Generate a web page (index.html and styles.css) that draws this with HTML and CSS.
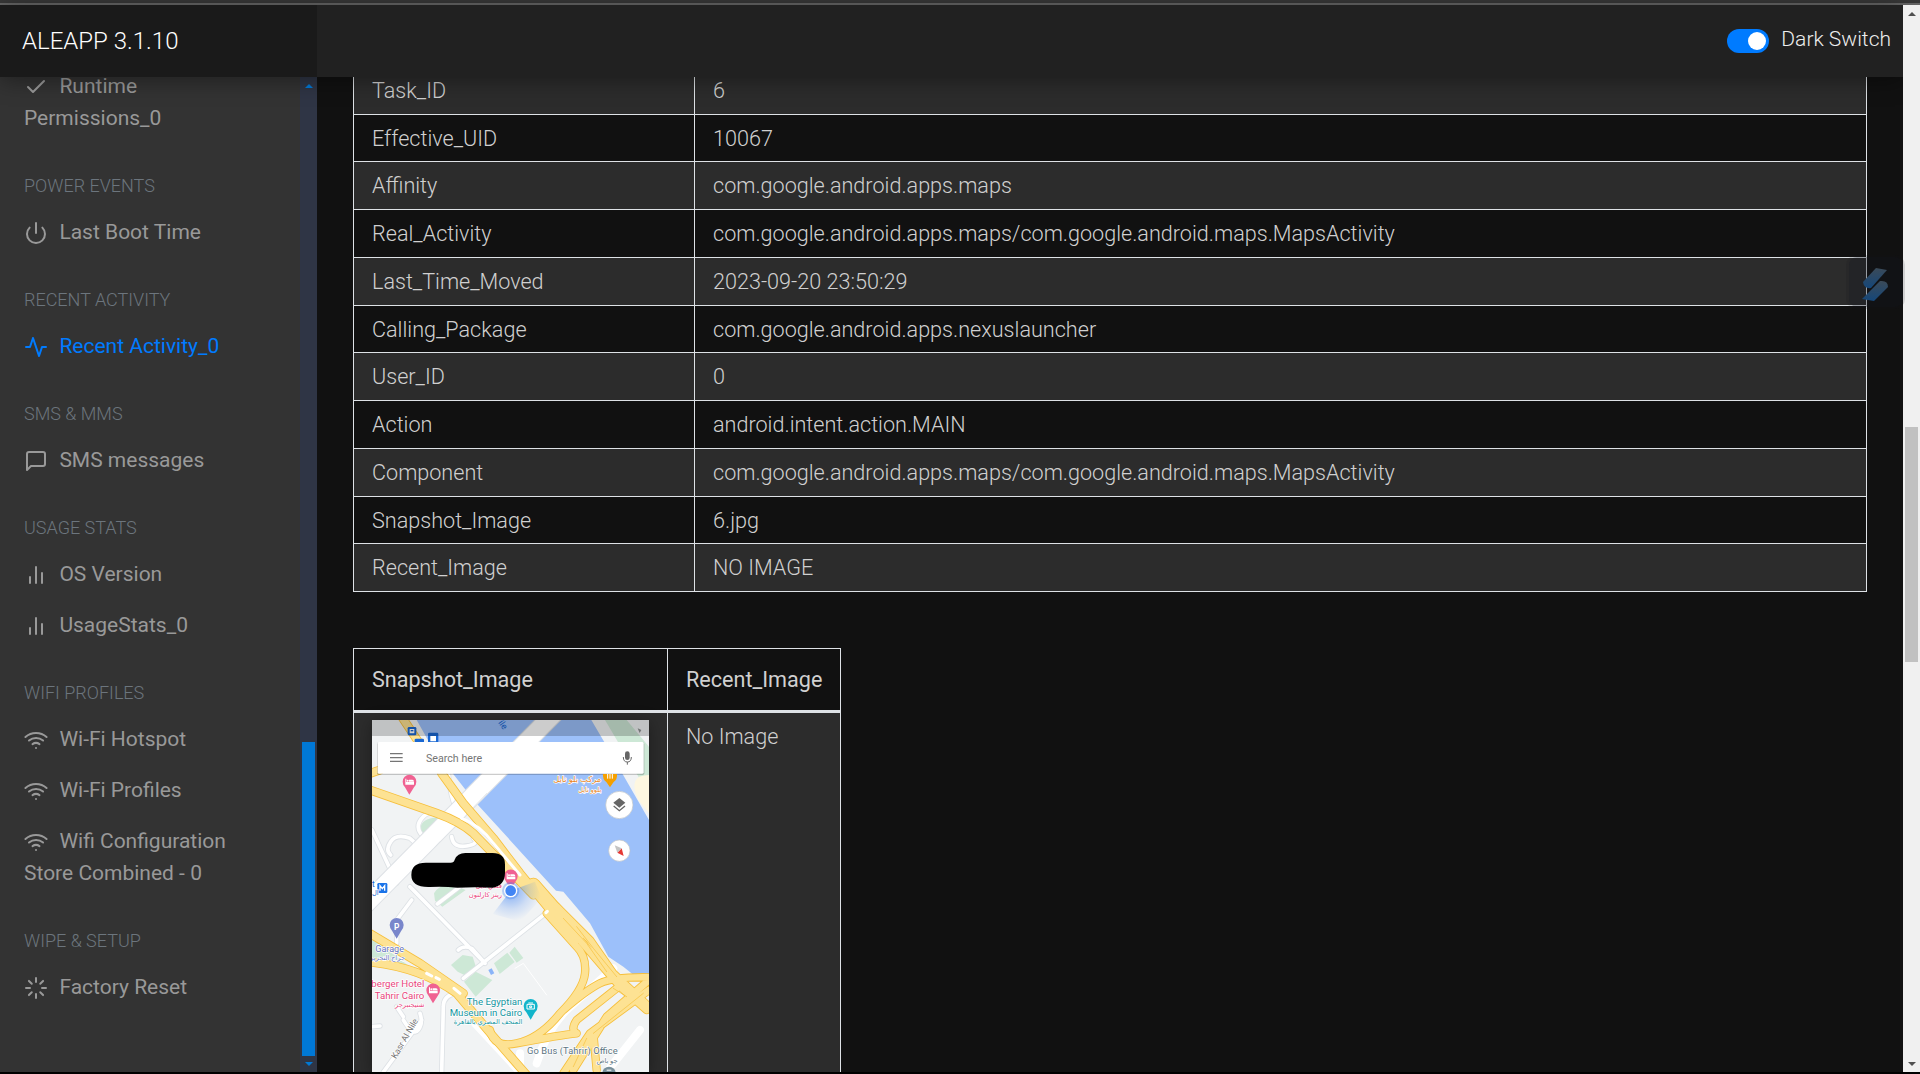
FILE: index.html
```html
<!DOCTYPE html>
<html lang="en">
<head>
<meta charset="utf-8">
<title>ALEAPP 3.1.10</title>
<link rel="stylesheet" href="styles.css">
</head>
<body>
<div class="window-edge"></div>
<div class="viewport">
  <div class="app">
    <header class="topbar">
      <div class="brand">ALEAPP 3.1.10</div>
      <div class="switch-area"><span class="toggle"><span class="knob"></span></span><span class="switch-label">Dark Switch</span></div>
    </header>
    <div class="body">
      <nav class="sidebar">
        <div class="nav-scroll">
          <a class="item"><svg class="icon" viewBox="0 0 24 24"><path d="M20 6 9 17l-5-5"/></svg>Runtime Permissions_0</a>
          <h6>Power Events</h6>
          <a class="item"><svg class="icon" viewBox="0 0 24 24"><path d="M18.36 6.64a9 9 0 1 1-12.73 0M12 2v10"/></svg>Last Boot Time</a>
          <h6>Recent Activity</h6>
          <a class="item active"><svg class="icon" viewBox="0 0 24 24"><path d="M22 12h-4l-3 9L9 3l-3 9H2"/></svg>Recent Activity_0</a>
          <h6>SMS &amp; MMS</h6>
          <a class="item"><svg class="icon" viewBox="0 0 24 24"><path d="M21 15a2 2 0 0 1-2 2H7l-4 4V5a2 2 0 0 1 2-2h14a2 2 0 0 1 2 2z"/></svg>SMS messages</a>
          <h6>Usage Stats</h6>
          <a class="item"><svg class="icon" viewBox="0 0 24 24"><path d="M18 20V10M12 20V4M6 20v-6"/></svg>OS Version</a>
          <a class="item"><svg class="icon" viewBox="0 0 24 24"><path d="M18 20V10M12 20V4M6 20v-6"/></svg>UsageStats_0</a>
          <h6>Wifi Profiles</h6>
          <a class="item"><svg class="icon" viewBox="0 0 24 24"><path d="M5 12.55a11 11 0 0 1 14.08 0M1.42 9a16 16 0 0 1 21.16 0M8.53 16.11a6 6 0 0 1 6.95 0M12 20h.01"/></svg>Wi-Fi Hotspot</a>
          <a class="item"><svg class="icon" viewBox="0 0 24 24"><path d="M5 12.55a11 11 0 0 1 14.08 0M1.42 9a16 16 0 0 1 21.16 0M8.53 16.11a6 6 0 0 1 6.95 0M12 20h.01"/></svg>Wi-Fi Profiles</a>
          <a class="item"><svg class="icon" viewBox="0 0 24 24"><path d="M5 12.55a11 11 0 0 1 14.08 0M1.42 9a16 16 0 0 1 21.16 0M8.53 16.11a6 6 0 0 1 6.95 0M12 20h.01"/></svg>Wifi Configuration Store Combined - 0</a>
          <h6>Wipe &amp; Setup</h6>
          <a class="item"><svg class="icon" viewBox="0 0 24 24"><path d="M12 2v4M12 18v4M4.93 4.93l2.83 2.83M16.24 16.24l2.83 2.83M2 12h4M18 12h4M4.93 19.07l2.83-2.83M16.24 7.76l2.83-2.83"/></svg>Factory Reset</a>
        </div>
        <div class="bar nav-bar"><i class="up"></i><b></b><i class="down"></i></div>
      </nav>
      <main class="content">
        <table class="grid details">
          <tr><td>Task_ID</td><td>6</td></tr>
          <tr><td>Effective_UID</td><td>10067</td></tr>
          <tr><td>Affinity</td><td>com.google.android.apps.maps</td></tr>
          <tr><td>Real_Activity</td><td>com.google.android.apps.maps/com.google.android.maps.MapsActivity</td></tr>
          <tr><td>Last_Time_Moved</td><td>2023-09-20 23:50:29</td></tr>
          <tr><td>Calling_Package</td><td>com.google.android.apps.nexuslauncher</td></tr>
          <tr><td>User_ID</td><td>0</td></tr>
          <tr><td>Action</td><td>android.intent.action.MAIN</td></tr>
          <tr><td>Component</td><td>com.google.android.apps.maps/com.google.android.maps.MapsActivity</td></tr>
          <tr><td>Snapshot_Image</td><td>6.jpg</td></tr>
          <tr><td>Recent_Image</td><td>NO IMAGE</td></tr>
        </table>
        <table class="grid images">
          <thead><tr><th>Snapshot_Image</th><th>Recent_Image</th></tr></thead>
          <tbody><tr><td>
            <svg class="map" viewBox="36 30 831 1056">
              <defs>
                <radialGradient id="beam" gradientUnits="userSpaceOnUse" cx="452" cy="542" r="92"><stop offset="0" stop-color="#4285f4" stop-opacity=".65"/><stop offset=".6" stop-color="#4285f4" stop-opacity=".2"/><stop offset="1" stop-color="#4285f4" stop-opacity="0"/></radialGradient>
              </defs>
              <path fill="#f1f3f4" d="M36 30h831v1056H36z"/>
              <!-- river -->
              <path fill="#9cc0fa" d="M170 30H694L735 100 867 330V806H835L790 770 745 740 690 640 610 545 588 542 345 275 215 110z"/>
              <path fill="#cde8d6" d="M735 30H800L867 110V225H850z"/>
              <path fill="#fef7e0" d="M867 195Q800 195 835 270L867 310z"/>
              <!-- parks -->
              <path fill="#cde8d6" d="M232 322q-50 5-50 32 0 25 28 22 20-3 66-42-18-14-44-12zM222 550q10-20 45-30l50 20-70 50-22-18zM273 765l35-30 30 5 8 25-3 15-30 15-20-10zM312 815l35-30 50 25-50 50zM402 760l40-32 22 28-45 36zM448 728l16-18 26 34-20 14zM36 685l80 60 80 60-160-55z"/>
              <g fill="none" stroke-linejoin="round" stroke-linecap="round">
                <!-- minor streets -->
                <path stroke="#dde1e5" stroke-width="16" d="M36 360 110 520M92 435Q75 420 92 395T150 385L195 425M150 530 375 760M232 582 300 530M560 608 310 805M375 760 335 715Q310 705 295 720M110 700V630L155 570M245 1086 250 890Q250 855 290 850M70 1086 185 930M36 950 60 948M130 930Q160 980 175 960T180 910M110 890 130 920M265 190Q270 260 290 300M190 380Q160 350 190 320T270 325M275 380Q280 415 320 408T340 385"/>
                <path stroke="#fff" stroke-width="11" d="M36 360 110 520M92 435Q75 420 92 395T150 385L195 425M150 530 375 760M232 582 300 530M560 608 310 805M375 760 335 715Q310 705 295 720M110 700V630L155 570M245 1086 250 890Q250 855 290 850M70 1086 185 930M36 950 60 948M130 930Q160 980 175 960T180 910M110 890 130 920M265 190Q270 260 290 300M190 380Q160 350 190 320T270 325M275 380Q280 415 320 408T340 385"/>
                <path stroke="#fff" stroke-width="3" d="M465 775 490 760 560 855"/>
                <path stroke="#fff" stroke-width="24" d="M840 960 740 1086M345 940 480 1086M530 1060Q560 960 620 900L760 775M480 1086V1030"/>
                <path stroke="#dde1e5" stroke-width="58" stroke-linecap="butt" d="M605 -12 0 600"/>
                <path stroke="#fff" stroke-width="52" stroke-linecap="butt" d="M605 -12 0 600"/>
                <path stroke="#dde1e5" stroke-width="2" d="M380 250 318 315M240 395 228 408M470 150 500 120"/>
                <!-- highways -->
                <g stroke="#f6bf3b">
                  <path stroke-width="27" d="M125 20 185 110M245 190 310 280 400 385 480 490 570 600M30 240 230 310Q300 335 340 370L520 555M30 190 60 180M20 755Q180 770 290 850L400 980 500 1095M20 665 180 760 310 850"/>
                  <path stroke-width="44" d="M520 525 590 605 650 680"/>
                  <path stroke-width="25" d="M590 590 690 690 760 790 867 890M560 610 650 710Q680 740 675 790T600 910Q540 985 470 1000T390 960M867 802Q760 800 720 820T610 900M867 840 690 970 610 1090M867 810 740 920 640 1080M650 970Q630 960 650 930L770 835M660 690 780 830 860 900M710 1080 700 970M470 1000Q600 975 650 970"/>
                </g>
                <g stroke="#fde293">
                  <path stroke-width="22" d="M125 20 185 110M245 190 310 280 400 385 480 490 570 600M30 240 230 310Q300 335 340 370L520 555M30 190 60 180M20 755Q180 770 290 850L400 980 500 1095M20 665 180 760 310 850"/>
                  <path stroke-width="39" d="M520 525 590 605 650 680"/>
                  <path stroke-width="20" d="M590 590 690 690 760 790 867 890M560 610 650 710Q680 740 675 790T600 910Q540 985 470 1000T390 960M867 802Q760 800 720 820T610 900M867 840 690 970 610 1090M867 810 740 920 640 1080M650 970Q630 960 650 930L770 835M660 690 780 830 860 900M710 1080 700 970M470 1000Q600 975 650 970"/>
                </g>
                <path stroke="#f6bf3b" stroke-width="2" d="M610 625 680 700 740 785M650 650 700 715 770 800M760 835 800 860M680 985 640 1070M850 850 700 970"/>
                <path stroke="#fff" stroke-width="9" d="M305 325Q360 345 400 400L480 495M200 790 215 798M228 803 238 808M282 835 300 850M558 608 562 604"/>
              </g>
              <path fill="#8ab4f8" d="m385 780 10-5 8 15-10 5z"/>
              <!-- transit badges -->
              <g fill="#1967d2"><rect x="143" y="51" width="26" height="25" rx="4"/><rect x="164" y="86" width="28" height="20" rx="4"/><rect x="204" y="68" width="31" height="30" rx="4"/><rect x="52" y="519" width="30" height="30" rx="4" fill="#1a73e8"/></g>
              <path fill="#fff" d="M149 57h14v13h-14zM211 78h17v16h-17z"/>
              <path fill="#1967d2" d="M152 60h8v4h-8z"/>
              <path fill="none" stroke="#fff" stroke-width="4" d="M60 542V527L67 536 74 527V542"/>
              <text x="414" y="38" transform="rotate(55 414 38)" class="m-blue" font-size="27">ile</text>
              <path fill="#000" fill-opacity=".2" d="M36 30h831v48H36z"/>
              <path fill="#202124" fill-opacity=".5" d="m833 55 11 5-5 9z"/>
              <!-- search field -->
              <rect x="51" y="97" width="802" height="98" rx="5" fill="#000" fill-opacity=".2"/>
              <rect x="53" y="96" width="798" height="95" rx="4" fill="#fff"/>
              <path stroke="#757575" stroke-width="4" d="M90 131h38M90 143h38M90 154h38"/>
              <text x="198" y="156" font-size="32" class="m-gray">Search here</text>
              <rect x="795" y="124" width="14" height="26" rx="7" fill="#666"/>
              <path fill="none" stroke="#666" stroke-width="3" d="M790 141q0 15 12 15t12-15M802 156v8"/>
              <!-- map controls -->
              <g stroke="#bdc1c6" stroke-width="2" fill="#fff"><circle cx="778" cy="285" r="41"/><circle cx="778" cy="422" r="32"/></g>
              <path fill="#666" d="m778 264 18 14-18 15-18-15z"/><path fill="none" stroke="#666" stroke-width="4" d="m761 288 17 14 17-14"/>
              <path fill="#e53935" d="m791 438-19-10 13-13z"/><path fill="#c4c4c4" d="m764 406 21 9-13 13z"/>
              <!-- pins -->
              <path fill="#f5a000" d="M729 192h42q2 15-10 24l-11 16-11-16q-12-9-10-24z"/>
              <path stroke="#fff" stroke-width="3" d="M743 192v14M750 192v14M757 192v14"/>
              <g id="hotel" fill="#f06292"><path d="M148 254 135 232Q128 225 128 215a20 20 0 0 1 41 0q0 10-7 17z"/><path fill="#fff" d="M136 206h3v10h23v8h-26zM147 209h10q5 0 5 6h-15z"/><circle cx="143" cy="212" r="3" fill="#fff"/></g>
              <use href="#hotel" x="304" y="284"/><use href="#hotel" x="71" y="626"/>
              <path fill="#7986cb" d="M110 686 97 664Q89 655 89 645a21 21 0 0 1 42 0q0 10-8 19z"/>
              <text x="110" y="660" font-size="25" font-weight="700" fill="#fff" text-anchor="middle">P</text>
              <path fill="#12b5cb" d="M512 929 499 907Q491 900 491 888a21 21 0 0 1 42 0q0 12-8 19z"/>
              <path fill="none" stroke="#fff" stroke-width="3" d="M501 883h22v14h-22zM505 879h14M509 888h6v5h-6z"/>
              <circle cx="747" cy="1090" r="20" fill="#78909c"/><path fill="#fff" d="M740 1079h14v3h-14z"/>
              <path fill="url(#beam)" d="M452 542 525 515 545 565 480 635 398 612z"/>
              <circle cx="452" cy="542" r="26" fill="#4285f4" fill-opacity=".35"/><circle cx="452" cy="542" r="20" fill="#fff"/><circle cx="452" cy="542" r="16" fill="#4285f4"/>
              <!-- place labels -->
              <g class="halo">
                <text x="724" y="217" font-size="25" class="m-orange" text-anchor="end">مركب بلو نايل</text>
                <text x="724" y="245" font-size="20" class="m-orange" text-anchor="end">بلوو نايل</text>
                <text x="426" y="535" font-size="20" class="m-pink" text-anchor="end">فندق نايل</text>
                <text x="426" y="561" font-size="20" class="m-pink" text-anchor="end">ريتز كارلتون</text>
                <text x="36" y="531" font-size="25" class="m-blue">t</text>
                <text x="36" y="554" font-size="20" class="m-blue">ال</text>
                <text x="46" y="725" font-size="27" class="m-violet">Garage</text>
                <text x="135" y="751" font-size="20" class="m-violet" text-anchor="end">جراج التحرير</text>
                <text x="193" y="832" font-size="29" class="m-pink" text-anchor="end">berger Hotel</text>
                <text x="193" y="866" font-size="29" class="m-pink" text-anchor="end">l Tahrir Cairo</text>
                <text x="193" y="891" font-size="20" class="m-pink" text-anchor="end">شتيجنبرجر</text>
                <text x="487" y="884" font-size="29" class="m-teal" text-anchor="end">The Egyptian</text>
                <text x="487" y="917" font-size="29" class="m-teal" text-anchor="end">Museum in Cairo</text>
                <text x="487" y="941" font-size="20" class="m-teal" text-anchor="end">المتحف المصري بالقاهرة</text>
                <text x="773" y="1032" font-size="28" class="m-slate" text-anchor="end" textLength="272">Go Bus (Tahrir) Office</text>
                <text x="773" y="1059" font-size="20" class="m-slate" text-anchor="end">جو باص</text>
                <text x="108" y="1048" font-size="26" class="m-gray" transform="rotate(-60 108 1048)">Kasr Al Nile</text>
              </g>
              <path fill="#000" d="M200 458h72q10 0 12-9 8-20 32-20h82q37 0 37 35v25q-1 38-37 44-55-2-106 0-40-4-82-2-56 2-56-36t46-37z"/>
            </svg>
          </td><td>No Image</td></tr></tbody>
        </table>
      </main>
    </div>
  </div>
  <div class="bar page-bar"><i class="up"></i><b></b><i class="down"></i></div>
  <svg class="float-badge" viewBox="0 0 60 60">
    <defs><linearGradient id="sg" x1="0" y1="0" x2="0" y2="1"><stop offset="0" stop-color="#3b4a58"/><stop offset="1" stop-color="#15477a"/></linearGradient></defs>
    <rect x="1" y="4" width="59" height="54" rx="10" fill="#12151f" fill-opacity=".14"/>
    <rect x="4" y="6" width="54" height="50" rx="8" fill="#12151f" fill-opacity=".22"/>
    <path fill="url(#sg)" d="M31 17 42 19 26 37Q19 38 18 31z"/>
    <path fill="url(#sg)" d="M35 30q8-1 8 6L29 50 17 48z"/>
  </svg>
</div>
</body>
</html>
```
FILE: styles.css
```css
* { box-sizing: border-box; }
body { margin: 0; height: 1074px; overflow: hidden; background: #000; color: #d0d0d0; font-family: Roboto, "Liberation Sans", sans-serif; font-weight: 300; display: flex; flex-direction: column; }
.window-edge { height: 5px; flex: none; background: #383838; border-bottom: 2px solid #666; }
.viewport { height: 1067px; display: flex; position: relative; }
.app { flex: 1; display: flex; flex-direction: column; min-width: 0; background: #111; }
.topbar { height: 72px; flex: none; display: flex; background: #212121; box-shadow: 0 3px 22px rgba(0,0,0,.4); position: relative; z-index: 2; }
.brand { width: 317px; background: #1a1a1a; color: #fff; font-size: 24px; line-height: 72px; padding-left: 22px; }
.switch-area { margin-left: auto; padding-right: 12px; display: flex; align-items: center; gap: 12px; color: #eee; font-size: 21px; }
.toggle { width: 42px; height: 24px; border-radius: 12px; background: #007bff; padding: 3px; display: flex; justify-content: flex-end; }
.knob { width: 18px; height: 18px; border-radius: 50%; background: #fff; }
.switch-label { line-height: 30px; padding-bottom: 5px; }
.body { flex: 1; min-height: 0; display: flex; }
.sidebar { width: 317px; display: flex; background: #333; overflow: hidden; }
.nav-scroll { width: 300px; margin-top: -16.4px; padding: 0 24px; }
.item { display: block; padding: 9.55px 24px 9.5px 0; font-size: 21px; font-weight: 400; line-height: 32px; color: #999; }
.item.active { color: #007bff; }
.icon { width: 24px; height: 24px; margin-right: 11.4px; vertical-align: -6px; fill: none; stroke: currentColor; stroke-width: 2; stroke-linecap: round; stroke-linejoin: round; }
h6 { margin: 31.4px 0 9.6px; font-size: 18px; font-weight: 300; line-height: 22px; color: #6c757d; text-transform: uppercase; }
.bar { width: 17px; flex: none; display: flex; flex-direction: column; align-items: center; }
.bar b { width: 13px; }
.bar i { width: 0; border: 4px solid transparent; }
.bar .up { border-top: 0; }
.bar .down { border-bottom: 0; margin-top: auto; }
.nav-bar { background: #2f3545; padding: 7px 0 6px; }
.nav-bar .up { border-bottom-color: #0078d7; }
.nav-bar .down { border-top-color: #0078d7; }
.nav-bar b { background: #0078d7; height: 314px; margin-top: 654px; }
.page-bar { background: #f0f0f0; padding: 7px 0 6px; position: relative; z-index: 3; }
.page-bar .up { border-bottom-color: #505050; }
.page-bar .down { border-top-color: #505050; }
.page-bar b { background: #c1c1c1; height: 235px; margin-top: 411px; }
.content { flex: 1; padding: 0 36px; overflow: hidden; }
.grid { border-collapse: collapse; font-size: 21.6px; line-height: 30px; }
.grid td, .grid th { border: 1px solid #dee2e6; padding: 0 18px; text-align: left; vertical-align: top; }
.grid th { font-weight: 400; }
.grid tr { height: 47.75px; }
.grid td { padding-top: 9px; }
.details { width: 1514px; table-layout: fixed; margin-top: -11.2px; }
.details td:first-child { width: 341px; }
.details tr:nth-child(odd), .images tbody tr { background: #2c2c2c; }
.images { margin-top: 56.2px; }
.images th { padding: 16px 18px 15px; border-bottom-width: 3px; }
.images td { height: 480px; }
.images td:first-child { padding-top: 7px; }
.map { display: block; width: 277px; height: 352px; font-family: Roboto, "Noto Sans", "DejaVu Sans", sans-serif; font-weight: 400; box-shadow: 0 3px 15px rgba(0,0,0,.35); }
.m-blue { fill: #1967d2; }
.m-gray { fill: #757575; }
.m-orange { fill: #e8872b; }
.m-pink { fill: #e9447c; }
.m-violet { fill: #6673c0; }
.m-teal { fill: #12959f; }
.m-slate { fill: #5b7481; }
.halo text { stroke: #fff; stroke-width: 4px; paint-order: stroke; stroke-linejoin: round; }
.float-badge { position: absolute; left: 1845px; top: 246px; width: 60px; height: 60px; z-index: 4; }
```
